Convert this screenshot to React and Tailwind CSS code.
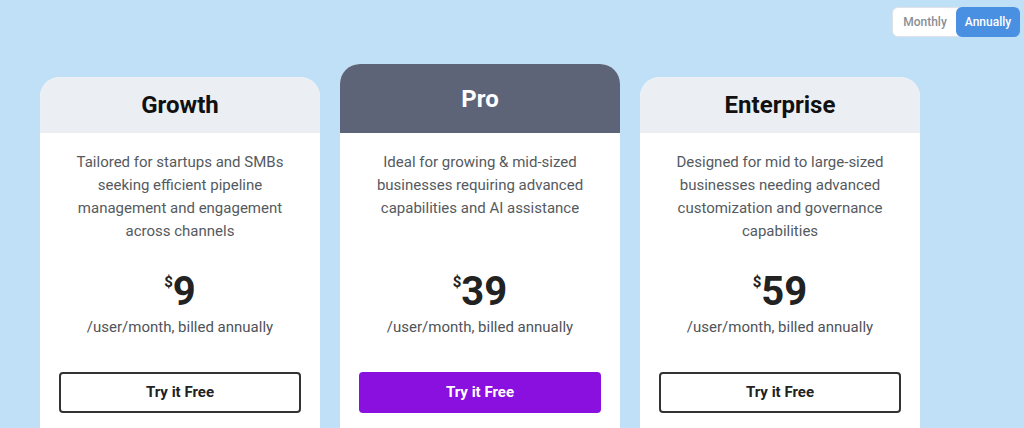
import { useState } from 'react';

const plans = [
    {
        name: 'Growth',
        description: 'Tailored for startups and SMBs seeking efficient pipeline management and engagement across channels',
        price: 9,
    },
    {
        name: 'Pro',
        description: 'Ideal for growing & mid-sized businesses requiring advanced capabilities and AI assistance',
        price: 39,
        featured: true,
    },
    {
        name: 'Enterprise',
        description: 'Designed for mid to large-sized businesses needing advanced customization and governance capabilities',
        price: 59,
    },
];

function BillingToggle({ period, setPeriod }) {
    return (
        <div className="flex h-[30px] w-[128px] rounded-md bg-white border border-[#dfe3e8] text-[12px] font-medium">
            <button
                onClick={() => setPeriod('monthly')}
                className={`flex-1 rounded-md ${period === 'monthly' ? 'bg-[#4a90e2] text-white' : 'text-[#8a8f96]'}`}
            >
                Monthly
            </button>
            <button
                onClick={() => setPeriod('annually')}
                className={`flex-1 rounded-md -m-px ${period === 'annually' ? 'bg-[#4a90e2] text-white' : 'text-[#8a8f96]'}`}
            >
                Annually
            </button>
        </div>
    );
}

function PlanCard({ plan, period }) {
    return (
        <div className={`w-[280px] shrink-0 rounded-t-[20px] overflow-hidden bg-white ${plan.featured ? '' : 'mt-[13px]'}`}>
            {/* Header */}
            <div className={`flex items-center justify-center ${plan.featured ? 'h-[69px] bg-[#5d6477] text-white' : 'h-[56px] bg-[#ebeff3] text-[#111]'}`}>
                <h2 className="text-[24px] font-bold leading-none">{plan.name}</h2>
            </div>

            {/* Body */}
            <div className="flex flex-col items-center pt-[18px] pb-10 text-center">
                <p className="h-[92px] px-[36px] text-[15px] leading-[23px] text-[#555a60]">{plan.description}</p>
                <div className="mt-[29px] flex items-start text-[#222]">
                    <span className="mt-[3px] text-[15px] font-bold leading-none">$</span>
                    <span className="text-[40px] font-bold leading-[40px]">{plan.price}</span>
                </div>
                <div className="mt-[4px] text-[15px] leading-[23px] text-[#4f5358]">
                    /user/month, billed {period}
                </div>
                <button
                    className={`mt-[33px] h-[41px] w-[242px] rounded-[4px] text-[15px] font-bold ${plan.featured ? 'bg-[#8a10e0] text-white' : 'border-2 border-[#333] text-[#222]'}`}
                >
                    Try it Free
                </button>
            </div>
        </div>
    );
}

export default function App() {
    const [period, setPeriod] = useState('annually');

    return (
        <div className="h-[428px] overflow-hidden bg-[#c0e0f8] font-['Roboto',sans-serif]">
            <div className="flex justify-end pt-[7px] pr-[4px]">
                <BillingToggle period={period} setPeriod={setPeriod} />
            </div>
            <div className="mt-[27px] flex items-start gap-5 pl-[40px]">
                {plans.map(plan => (
                    <PlanCard key={plan.name} plan={plan} period={period} />
                ))}
            </div>
        </div>
    );
}
